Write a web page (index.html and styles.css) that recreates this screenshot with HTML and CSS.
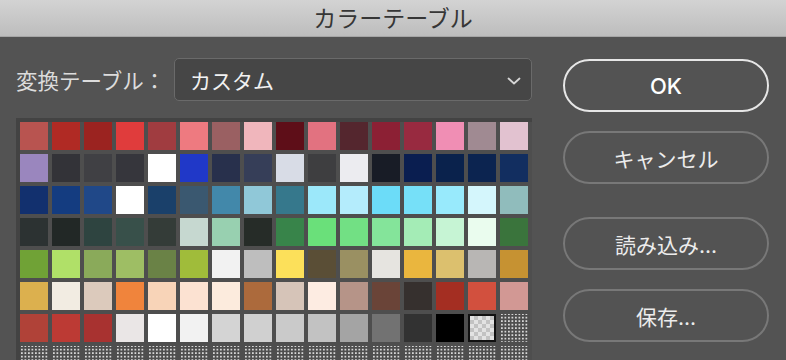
FILE: index.html
```html
<!DOCTYPE html>
<html lang="ja">
<head>
    <meta charset="UTF-8">
    <title>カラーテーブル</title>
    <link rel="stylesheet" href="styles.css">
</head>
<body>
    <div class="titlebar">
        <span class="title">カラーテーブル</span>
    </div>

    <div class="dialog">
        <div class="left">
            <div class="table-row">
                <label class="table-label">変換テーブル：</label>
                <div class="select">
                    <span>カスタム</span>
                    <svg class="chevron" width="14" height="8" viewBox="0 0 14 8">
                        <path d="M1.5 1.5 L7 6.5 L12.5 1.5" fill="none" stroke="#d6d6d6" stroke-width="1.8" stroke-linecap="round" stroke-linejoin="round"/>
                    </svg>
                </div>
            </div>

            <div class="swatches" id="swatches"></div>
        </div>

        <div class="buttons">
            <button class="btn btn-default">OK</button>
            <button class="btn">キャンセル</button>
            <button class="btn btn-gap">読み込み...</button>
            <button class="btn">保存...</button>
        </div>
    </div>

    <script>
        const colors = [
            '#b85450', '#b02a24', '#9b2320', '#e03c3c', '#a03c40', '#ee7a80', '#9a6062', '#f0b6bc',
            '#5e0e18', '#e27280', '#54262e', '#8c2034', '#982a40', '#f08eb4', '#a08a92', '#e2c2d0',

            '#9a86be', '#333338', '#404044', '#36363c', '#ffffff', '#2038c8', '#28304c', '#363e58',
            '#d8dce6', '#3e3e40', '#ececf0', '#181c26', '#0a1e50', '#0a224c', '#0c2450', '#122e60',

            '#12306e', '#143c80', '#204888', '#ffffff', '#1a406a', '#3a5870', '#4288aa', '#90c8d8',
            '#36788c', '#9ce8fa', '#b4ecfc', '#6cdcf8', '#76e0f8', '#98eafc', '#d4f6fc', '#90bcbc',

            '#2c3232', '#222826', '#2e4440', '#38504a', '#343c38', '#c6d8d0', '#98d0b0', '#262c28',
            '#38844a', '#6ae07a', '#72e084', '#84e49a', '#a4ecb6', '#c6f4d4', '#eafcee', '#3a743c',

            '#70a236', '#b0e068', '#8aaa5a', '#9ebe64', '#6a8246', '#a0bc3a', '#f2f2f2', '#bebebe',
            '#fce05a', '#5a4e36', '#9a9062', '#e6e4e0', '#eab63e', '#dcc06e', '#b8b6b4', '#c69232',

            '#dcb04e', '#f2ece2', '#dccabc', '#f0843c', '#f8d4b8', '#fce2d2', '#fcebdd', '#ac6a3c',
            '#d6c4b8', '#fdece2', '#b69488', '#6a4438', '#36302e', '#a42e22', '#d2503e', '#d29894',

            '#b04238', '#bc3a34', '#a83230', '#eae6e6', '#ffffff', '#f2f2f2', '#d4d4d4', '#d0d0d0',
            '#cacaca', '#c2c2c2', '#a4a4a4', '#727272', '#323232', '#000000', 'transparent'
        ];

        const grid = document.getElementById('swatches');

        for (let i = 0; i < 128; i++) {
            const cell = document.createElement('div');
            cell.className = 'swatch';

            if (i < colors.length) {
                if (colors[i] === 'transparent') {
                    cell.classList.add('swatch-transparent');
                } else {
                    cell.style.background = colors[i];
                }
            } else {
                cell.classList.add('swatch-empty');
            }

            grid.appendChild(cell);
        }
    </script>
</body>
</html>
```

FILE: styles.css
```css
* {
    margin: 0;
    padding: 0;
    box-sizing: border-box;
}

body {
    font-family: Inter, "Noto Sans CJK JP", sans-serif;
    background: #535353;
    color: #ececec;
    height: 360px;
    overflow: hidden;
}

.titlebar {
    height: 37px;
    background: linear-gradient(to bottom, #d3d3d3, #bdbdbd);
    border-bottom: 1px solid #a6a6a6;
    display: flex;
    justify-content: center;
    align-items: center;
}

.title {
    font-family: "Noto Sans CJK JP", sans-serif;
    font-size: 23px;
    color: #363636;
    line-height: 1;
    margin-top: -1px;
}

.dialog {
    display: flex;
    padding: 21px 0 0 16px;
}

.left {
    width: 516px;
}

.table-row {
    display: flex;
    align-items: center;
    height: 43px;
}

.table-label {
    flex: 1;
    font-family: "Noto Sans CJK JP", sans-serif;
    font-size: 21.5px;
    color: #dcdcdc;
    white-space: nowrap;
}

.select {
    width: 358px;
    height: 43px;
    display: flex;
    align-items: center;
    justify-content: space-between;
    padding: 0 10px 0 15px;
    background: #464646;
    border: 1.5px solid #6a6a6a;
    border-radius: 5px;
    font-family: "Noto Sans CJK JP", sans-serif;
    font-size: 21px;
    color: #f2f2f2;
}

.chevron {
    margin-top: 2px;
}

.swatches {
    margin-top: 17px;
    display: grid;
    grid-template-columns: repeat(16, 28px);
    grid-auto-rows: 28px;
    gap: 4px;
    padding: 4px;
    background: #4e4e4e;
    box-shadow: inset 4px 4px 0 #434343;
}

.swatch {
    width: 28px;
    height: 28px;
}

.swatch-transparent {
    border: 2px solid #111111;
    background-color: #e2e2e2;
    background-image:
        linear-gradient(45deg, #c2c2c2 25%, transparent 25%, transparent 75%, #c2c2c2 75%),
        linear-gradient(45deg, #c2c2c2 25%, transparent 25%, transparent 75%, #c2c2c2 75%);
    background-size: 8px 8px;
    background-position: 0 0, 4px 4px;
}

.swatch-empty {
    background-color: #d6d6d6;
    background-image:
        linear-gradient(90deg, transparent 50%, #4e4e4e 50%),
        linear-gradient(0deg, transparent 50%, #4e4e4e 50%);
    background-size: 3.5px 3.5px;
    background-position: 1px 1px;
}

.buttons {
    margin-left: 31px;
    padding-top: 1px;
    display: flex;
    flex-direction: column;
    width: 206px;
}

.btn {
    height: 53px;
    margin-bottom: 19px;
    background: transparent;
    border: 2px solid #787878;
    border-radius: 27px;
    color: #ececec;
    font-family: Inter, "Noto Sans CJK JP", sans-serif;
    font-size: 21px;
    cursor: pointer;
}

.btn-default {
    border-color: #e6e6e6;
    color: #ffffff;
    font-weight: 500;
    font-size: 22px;
}

.btn-gap {
    margin-top: 14px;
}
```
